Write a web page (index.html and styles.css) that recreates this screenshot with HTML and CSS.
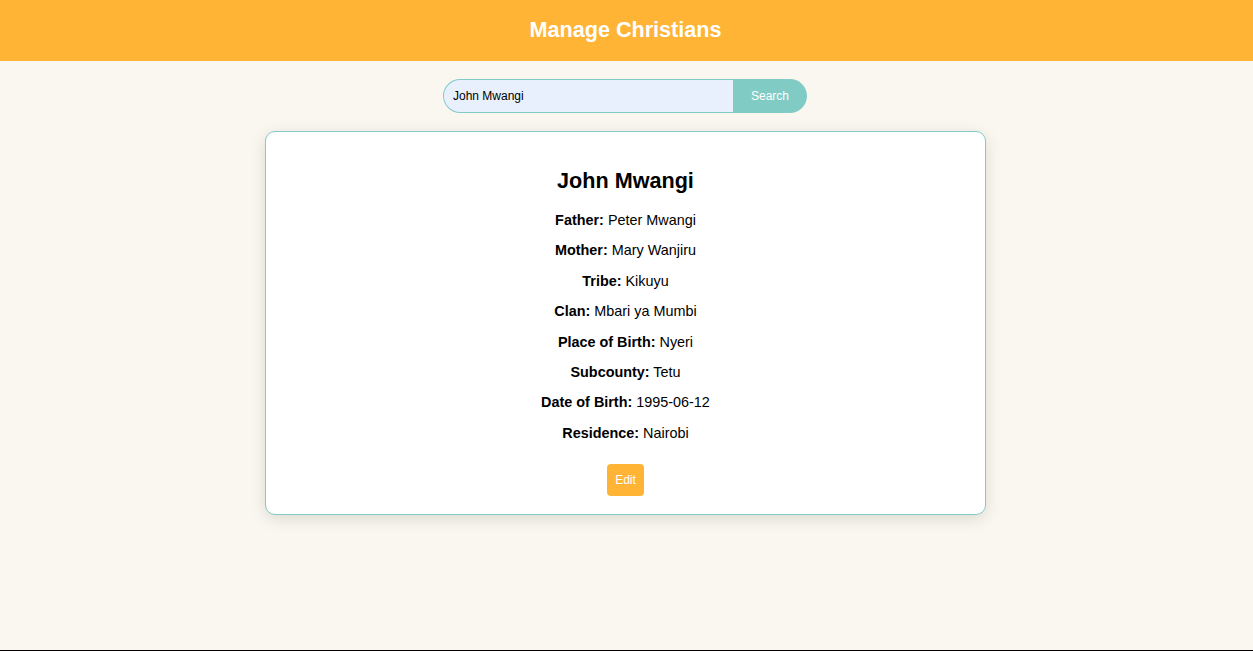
FILE: index.html
```html
<!DOCTYPE html>
<html lang="en">
<head>
<meta charset="UTF-8">
<title>Manage Christians</title>
<link rel="stylesheet" href="styles.css">
</head>
<body>
<div class="page">
  <header class="topbar">
    <h1 class="title">Manage Christians</h1>
  </header>
  <main class="content">
    <form class="search">
      <input class="search-input" type="text" value="John Mwangi">
      <button class="search-btn" type="button">Search</button>
    </form>
    <section class="card">
      <h2 class="name">John Mwangi</h2>
      <p class="row"><strong>Father:</strong> Peter Mwangi</p>
      <p class="row"><strong>Mother:</strong> Mary Wanjiru</p>
      <p class="row"><strong>Tribe:</strong> Kikuyu</p>
      <p class="row"><strong>Clan:</strong> Mbari ya Mumbi</p>
      <p class="row"><strong>Place of Birth:</strong> Nyeri</p>
      <p class="row"><strong>Subcounty:</strong> Tetu</p>
      <p class="row"><strong>Date of Birth:</strong> 1995-06-12</p>
      <p class="row"><strong>Residence:</strong> Nairobi</p>
      <div class="actions"><button class="edit-btn" type="button">Edit</button></div>
    </section>
  </main>
  <footer class="footer"></footer>
</div>
</body>
</html>
```

FILE: styles.css
```css
* { box-sizing: border-box; }
html, body { margin: 0; padding: 0; }
body {
  background: #faf7f0;
  font-family: "Liberation Sans", Arial, sans-serif;
  color: #000;
}
.page {
  min-height: 100vh;
  display: flex;
  flex-direction: column;
}
.topbar {
  background: #ffb436;
  height: 61px;
  display: flex;
  align-items: center;
  justify-content: center;
  padding-right: 2px;
}
.title {
  margin: 0;
  color: #fff;
  font-size: 21.6px;
  font-weight: bold;
  line-height: 25px;
  position: relative;
  top: -1px;
}
.content {
  flex: 1;
  display: flex;
  flex-direction: column;
  align-items: center;
  padding-top: 18px;
  padding-right: 2px;
}
.search {
  display: flex;
  width: 364px;
  height: 34px;
  margin: 0 1px 18px 0;
}
.search-input {
  width: 290px;
  height: 34px;
  border: 1px solid #80cbc4;
  border-right: none;
  border-radius: 17px 0 0 17px;
  background: #e8f0fe;
  padding: 0 9px;
  font-family: "Liberation Sans", Arial, sans-serif;
  font-size: 12px;
  color: #000;
  outline: none;
}
.search-btn {
  width: 74px;
  height: 34px;
  border: none;
  border-radius: 0 17px 17px 0;
  background: #80cbc4;
  color: #fff;
  font-family: "Liberation Sans", Arial, sans-serif;
  font-size: 12px;
  padding: 0;
}
.card {
  width: 721px;
  background: #fff;
  border: 1px solid #80cbc4;
  border-radius: 10px;
  box-shadow: 0 4px 16px rgba(0, 0, 0, 0.12);
  padding: 36px 20px 18px;
  text-align: center;
  font-size: 14.4px;
}
.name {
  margin: 0 0 18px;
  font-size: 21.6px;
  line-height: 26px;
  font-weight: bold;
}
.row {
  margin: 14.4px 0;
  line-height: 16px;
}
.row strong { font-weight: bold; }
.actions {
  margin-top: 23px;
  display: flex;
  justify-content: center;
}
.edit-btn {
  background: #ffb436;
  color: #fff;
  border: none;
  border-radius: 4px;
  height: 32px;
  padding: 0 8px;
  font-family: "Liberation Sans", Arial, sans-serif;
  font-size: 12px;
  line-height: 32px;
}
.footer {
  height: 1px;
  background: #000;
}
```
